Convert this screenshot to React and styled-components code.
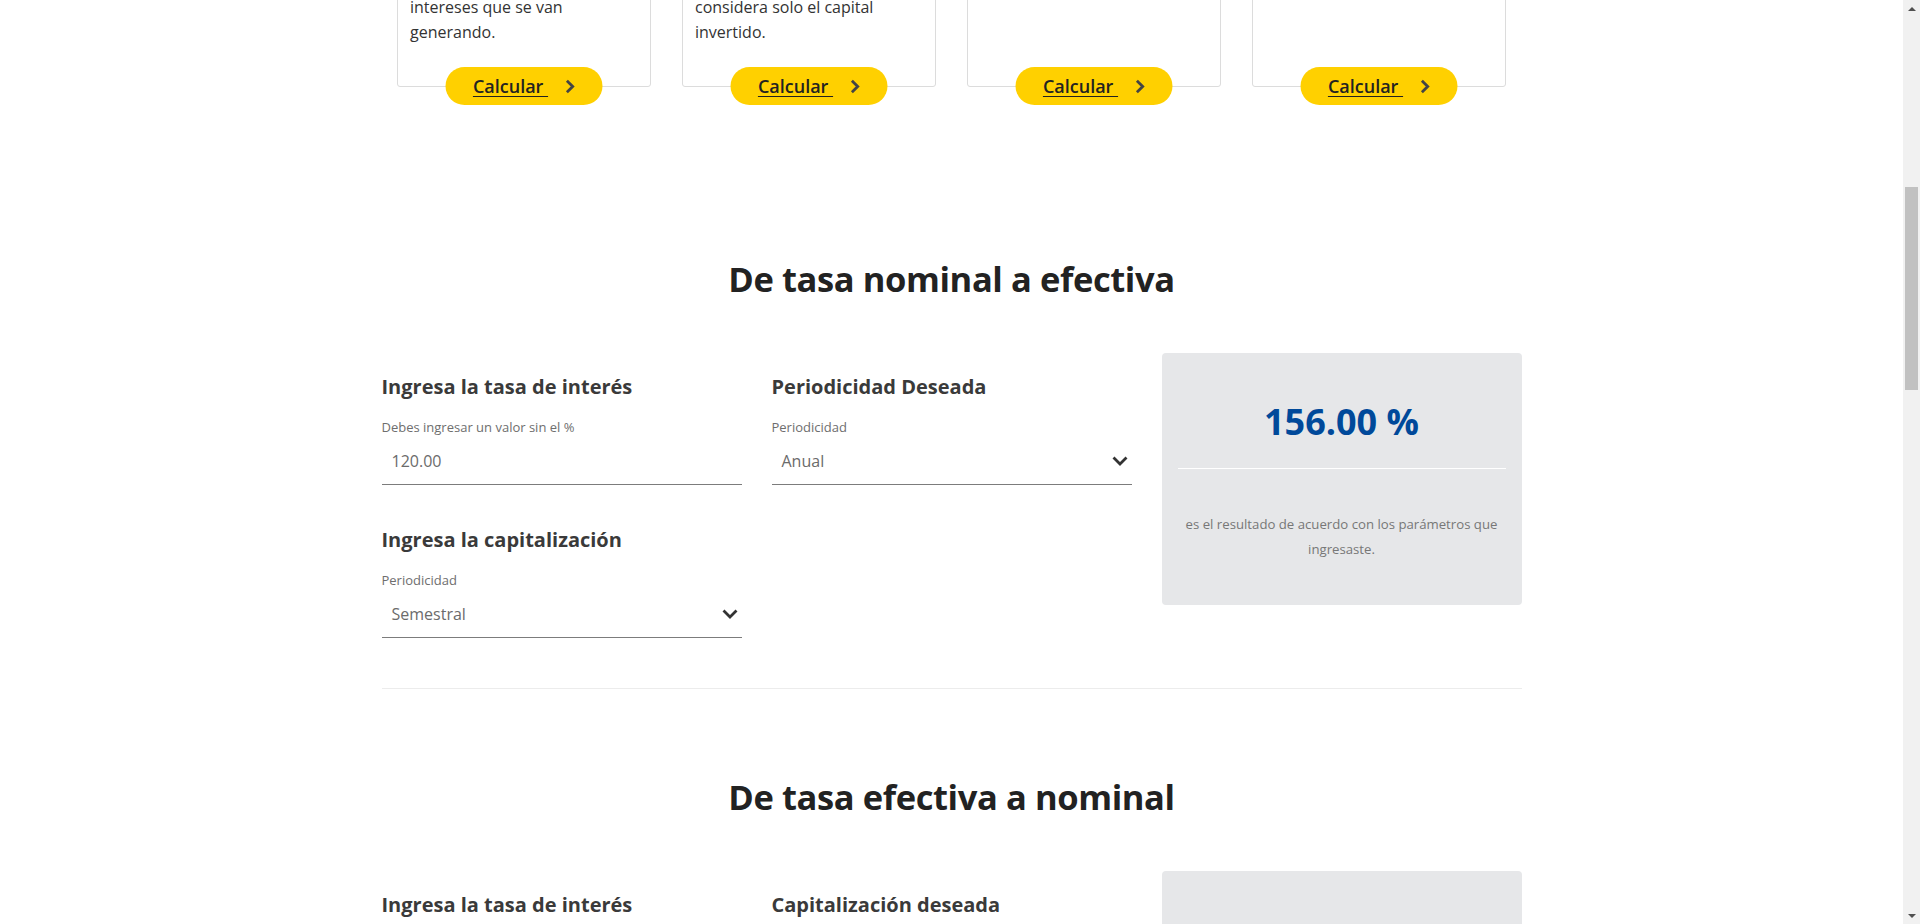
import React from 'react';
import styled, { createGlobalStyle } from 'styled-components';

const GlobalStyle = createGlobalStyle`
  html, body {
    margin: 0;
    padding: 0;
    height: 100%;
    overflow: hidden;
    background: #fff;
  }
  body {
    font-family: "Open Sans", "Noto Sans", "Liberation Sans", sans-serif;
    color: #333;
  }
  * { box-sizing: border-box; }
`;

const Window = styled.div`
  display: flex;
  height: 924px;
  overflow: hidden;
`;

const Main = styled.main`
  flex: 1;
  min-width: 0;
  overflow: hidden;
`;

// page is scrolled: only the bottom of the cards row is in view
const ScrolledTop = styled.div`
  height: 87px;
  display: flex;
  align-items: flex-end;
  justify-content: center;
`;

const CardsRow = styled.div`
  display: grid;
  grid-template-columns: repeat(4, 254px);
  column-gap: 31px;
`;

const Card = styled.div`
  position: relative;
  border: 1px solid #dcdcdc;
  border-radius: 3px;
  padding: 24px 12px 41px 12px;
  background: #fff;
`;

const CardTitle = styled.h4`
  margin: 0 0 8px;
  font-size: 18px;
  line-height: 26px;
  font-weight: 700;
  color: #333;
`;

const CardText = styled.p`
  margin: 0;
  font-size: 16px;
  line-height: 25px;
  color: #333;
  white-space: pre-line;
`;

const CalcButton = styled.button`
  position: absolute;
  left: 50%;
  bottom: 0;
  transform: translate(-50%, 50%);
  width: 157px;
  height: 38px;
  border: none;
  border-radius: 19px;
  background: #ffd000;
  display: flex;
  align-items: center;
  justify-content: center;
  padding: 0;
  cursor: pointer;
  font-family: inherit;
  font-size: 18px;
  font-weight: 600;
  color: #222;
`;

const CalcLabel = styled.span`
  text-decoration: underline;
  text-underline-offset: 3px;
  white-space: pre;
`;

const CalcChevron = styled.svg`
  margin-left: 16px;
  width: 11px;
  height: 15px;
`;

const Section = styled.section`
  width: 1140px;
  margin: 0 auto;
  padding-top: ${(p) => p.$top}px;
`;

const SectionTitle = styled.h2`
  margin: 0 0 52px;
  text-align: center;
  font-size: 34.5px;
  line-height: 44px;
  font-weight: 700;
  color: #222;
  letter-spacing: -0.4px;
`;

const FormGrid = styled.div`
  display: grid;
  grid-template-columns: repeat(3, 360px);
  justify-content: space-between;
  align-items: start;
`;

const Column = styled.div`
  display: flex;
  flex-direction: column;
  gap: 21px;
`;

const Field = styled.div`
  padding-top: 20px;
`;

const FieldTitle = styled.h3`
  margin: 0 0 17px;
  font-size: 20px;
  line-height: 28px;
  font-weight: 700;
  color: #3a3a3a;
`;

const FieldLabel = styled.label`
  display: block;
  font-size: 13px;
  line-height: 18px;
  color: #6e6e6e;
`;

const TextInput = styled.input`
  display: block;
  width: 100%;
  height: 48px;
  margin-top: 1px;
  padding: 0 10px;
  border: none;
  border-bottom: 1px solid #7c7c7c;
  outline: none;
  background: transparent;
  font-family: inherit;
  font-size: 16px;
  color: #6b6b6b;
`;

const Select = styled.div`
  display: flex;
  align-items: center;
  justify-content: space-between;
  height: 48px;
  margin-top: 1px;
  padding: 0 4px 0 10px;
  border-bottom: 1px solid #7c7c7c;
  font-size: 16px;
  color: #6b6b6b;
  cursor: pointer;
`;

const SelectChevron = styled.svg`
  width: 16px;
  height: 10px;
`;

const ResultBox = styled.div`
  background: #e6e7e9;
  border-radius: 4px;
  padding: 45px 16px 43px;
  text-align: center;
`;

const ResultValue = styled.div`
  font-size: 36px;
  line-height: 48px;
  font-weight: 700;
  color: #00499a;
`;

const ResultRule = styled.div`
  height: 1px;
  margin-top: 22px;
  background: #fff;
`;

const ResultText = styled.p`
  margin: 43px 0 0;
  font-size: 13.2px;
  line-height: 25px;
  color: #777;
`;

const Divider = styled.hr`
  width: 1140px;
  margin: 50px auto 0;
  border: none;
  border-top: 1px solid #ececec;
`;

const Scrollbar = styled.div`
  width: 17px;
  flex: none;
  background: #f1f1f1;
  display: flex;
  flex-direction: column;
  align-items: center;
`;

const ScrollArrow = styled.div`
  height: 17px;
  width: 17px;
  display: flex;
  align-items: center;
  justify-content: center;
  margin-top: ${(p) => (p.$down ? 'auto' : '0')};
  &::before {
    content: '';
    border-left: 4px solid transparent;
    border-right: 4px solid transparent;
    ${(p) => (p.$down ? 'border-top: 4px solid #505050;' : 'border-bottom: 4px solid #505050;')}
  }
`;

const ScrollThumb = styled.div`
  width: 13px;
  height: 203px;
  margin-top: 170px;
  background: #c1c1c1;
`;

const cards = [
  {
    title: 'Interés compuesto',
    text: 'Calcula la rentabilidad de tu\ninversión considerando el\ncapital inicial más los\nintereses que se van\ngenerando.',
  },
  {
    title: 'Interés simple',
    text: 'Calcula la rentabilidad de tu\ninversión, tomando en cuenta\nque el interés simple\nconsidera solo el capital\ninvertido.',
  },
  {
    title: 'Tasa nominal a efectiva',
    text: 'Convierte una tasa nominal\nen su equivalente efectiva.',
  },
  {
    title: 'Tasa efectiva a nominal',
    text: 'Convierte una tasa efectiva\nen su equivalente nominal.',
  },
];

const Chevron = () => (
  <CalcChevron viewBox="0 0 11 15">
    <path d="M2.4 1.8 L8.2 7.5 L2.4 13.2" fill="none" stroke="#444" strokeWidth="2.8" />
  </CalcChevron>
);

const Dropdown = ({ value }) => (
  <Select>
    <span>{value}</span>
    <SelectChevron viewBox="0 0 16 10">
      <path d="M1.5 1.5 L8 8 L14.5 1.5" fill="none" stroke="#333" strokeWidth="2.8" />
    </SelectChevron>
  </Select>
);

const Result = ({ value }) => (
  <ResultBox>
    <ResultValue>{value}</ResultValue>
    <ResultRule />
    <ResultText>es el resultado de acuerdo con los parámetros que ingresaste.</ResultText>
  </ResultBox>
);

const App = () => (
  <Window>
    <GlobalStyle />
    <Main>
      <ScrolledTop>
        <CardsRow>
          {cards.map((c) => (
            <Card key={c.title}>
              <CardTitle>{c.title}</CardTitle>
              <CardText>{c.text}</CardText>
              <CalcButton>
                <CalcLabel>Calcular </CalcLabel>
                <Chevron />
              </CalcButton>
            </Card>
          ))}
        </CardsRow>
      </ScrolledTop>

      <Section $top={170}>
        <SectionTitle>De tasa nominal a efectiva</SectionTitle>
        <FormGrid>
          <Column>
            <Field>
              <FieldTitle>Ingresa la tasa de interés</FieldTitle>
              <FieldLabel>Debes ingresar un valor sin el %</FieldLabel>
              <TextInput defaultValue="120.00" />
            </Field>
            <Field>
              <FieldTitle>Ingresa la capitalización</FieldTitle>
              <FieldLabel>Periodicidad</FieldLabel>
              <Dropdown value="Semestral" />
            </Field>
          </Column>
          <Column>
            <Field>
              <FieldTitle>Periodicidad Deseada</FieldTitle>
              <FieldLabel>Periodicidad</FieldLabel>
              <Dropdown value="Anual" />
            </Field>
          </Column>
          <Result value="156.00 %" />
        </FormGrid>
      </Section>

      <Divider />

      <Section $top={86}>
        <SectionTitle>De tasa efectiva a nominal</SectionTitle>
        <FormGrid>
          <Column>
            <Field>
              <FieldTitle>Ingresa la tasa de interés</FieldTitle>
              <FieldLabel>Debes ingresar un valor sin el %</FieldLabel>
              <TextInput defaultValue="156.00" />
            </Field>
            <Field>
              <FieldTitle>Ingresa la periodicidad</FieldTitle>
              <FieldLabel>Periodicidad</FieldLabel>
              <Dropdown value="Anual" />
            </Field>
          </Column>
          <Column>
            <Field>
              <FieldTitle>Capitalización deseada</FieldTitle>
              <FieldLabel>Periodicidad</FieldLabel>
              <Dropdown value="Semestral" />
            </Field>
          </Column>
          <Result value="120.00 %" />
        </FormGrid>
      </Section>
    </Main>
    <Scrollbar>
      <ScrollArrow />
      <ScrollThumb />
      <ScrollArrow $down />
    </Scrollbar>
  </Window>
);

export default App;
